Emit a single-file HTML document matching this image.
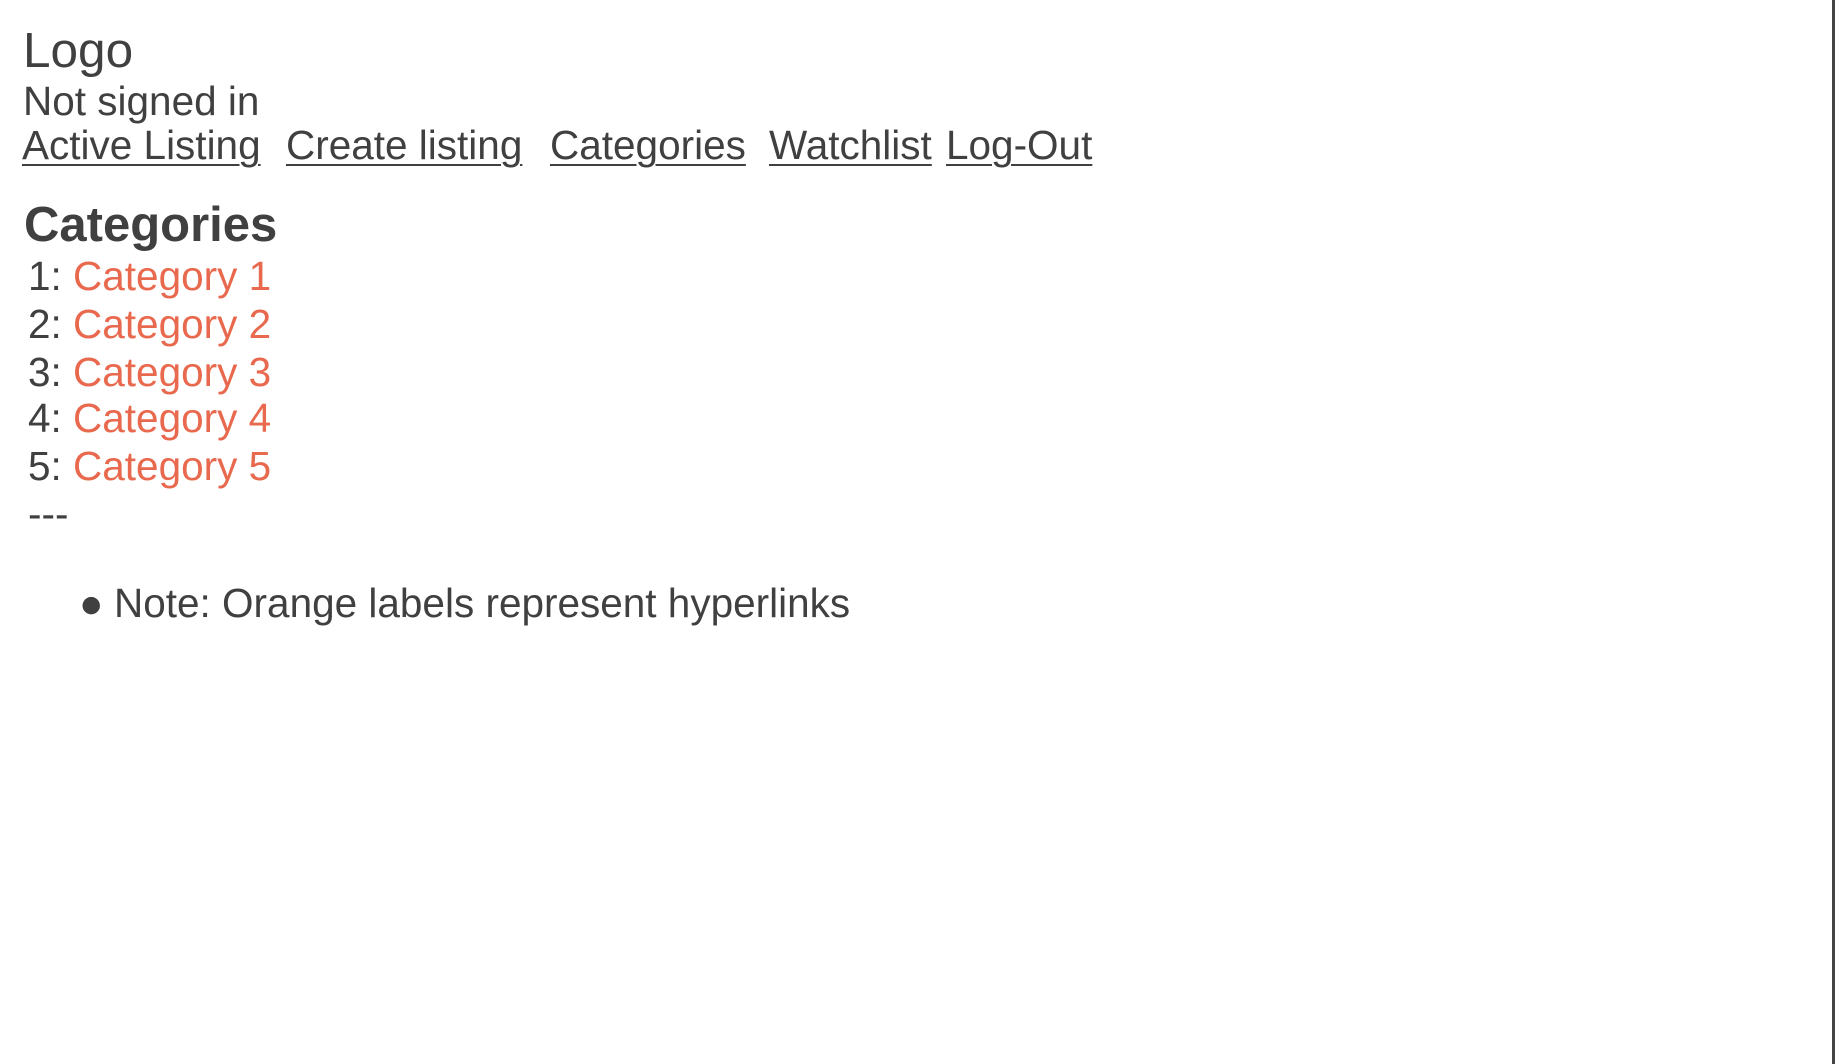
<!DOCTYPE html>
<html><head><meta charset="utf-8"><style>
html,body{margin:0;padding:0;background:#fff;width:1836px;height:1064px;overflow:hidden;position:relative;font-family:"Liberation Sans",Arial,sans-serif;color:#404040}
.t{position:absolute;white-space:nowrap;line-height:1}
a{color:#404040;text-decoration:underline;text-decoration-thickness:2px;text-underline-offset:5px}
.o{color:#e8694e}
.vl{position:absolute;left:1832px;top:0;width:3px;height:1064px;background:#444}
</style></head><body>
<div class="t" style="left:23px;top:26px;font-size:49.5px">Logo</div>
<div class="t" style="left:23px;top:81px;font-size:40.5px">Not signed in</div>
<div class="t" style="left:22px;top:125px;font-size:40.5px"><a>Active Listing</a></div>
<div class="t" style="left:286px;top:125px;font-size:40.5px"><a>Create listing</a></div>
<div class="t" style="left:550px;top:125px;font-size:40.5px"><a>Categories</a></div>
<div class="t" style="left:769px;top:125px;font-size:40.5px"><a>Watchlist</a></div>
<div class="t" style="left:946px;top:125px;font-size:40.5px"><a>Log-Out</a></div>
<div class="t" style="left:24px;top:201px;font-size:49px;font-weight:bold">Categories</div>
<div class="t" style="left:28px;top:256px;font-size:40.5px">1: <span class="o">Category 1</span></div>
<div class="t" style="left:28px;top:304px;font-size:40.5px">2: <span class="o">Category 2</span></div>
<div class="t" style="left:28px;top:352px;font-size:40.5px">3: <span class="o">Category 3</span></div>
<div class="t" style="left:28px;top:398px;font-size:40.5px">4: <span class="o">Category 4</span></div>
<div class="t" style="left:28px;top:446px;font-size:40.5px">5: <span class="o">Category 5</span></div>
<div class="t" style="left:28px;top:494px;font-size:40.5px">---</div>
<div class="t" style="left:79px;top:583px;font-size:40.5px">●</div>
<div class="t" style="left:114px;top:583px;font-size:40.5px">Note: Orange labels represent hyperlinks</div>
<div class="vl"></div>
</body></html>
